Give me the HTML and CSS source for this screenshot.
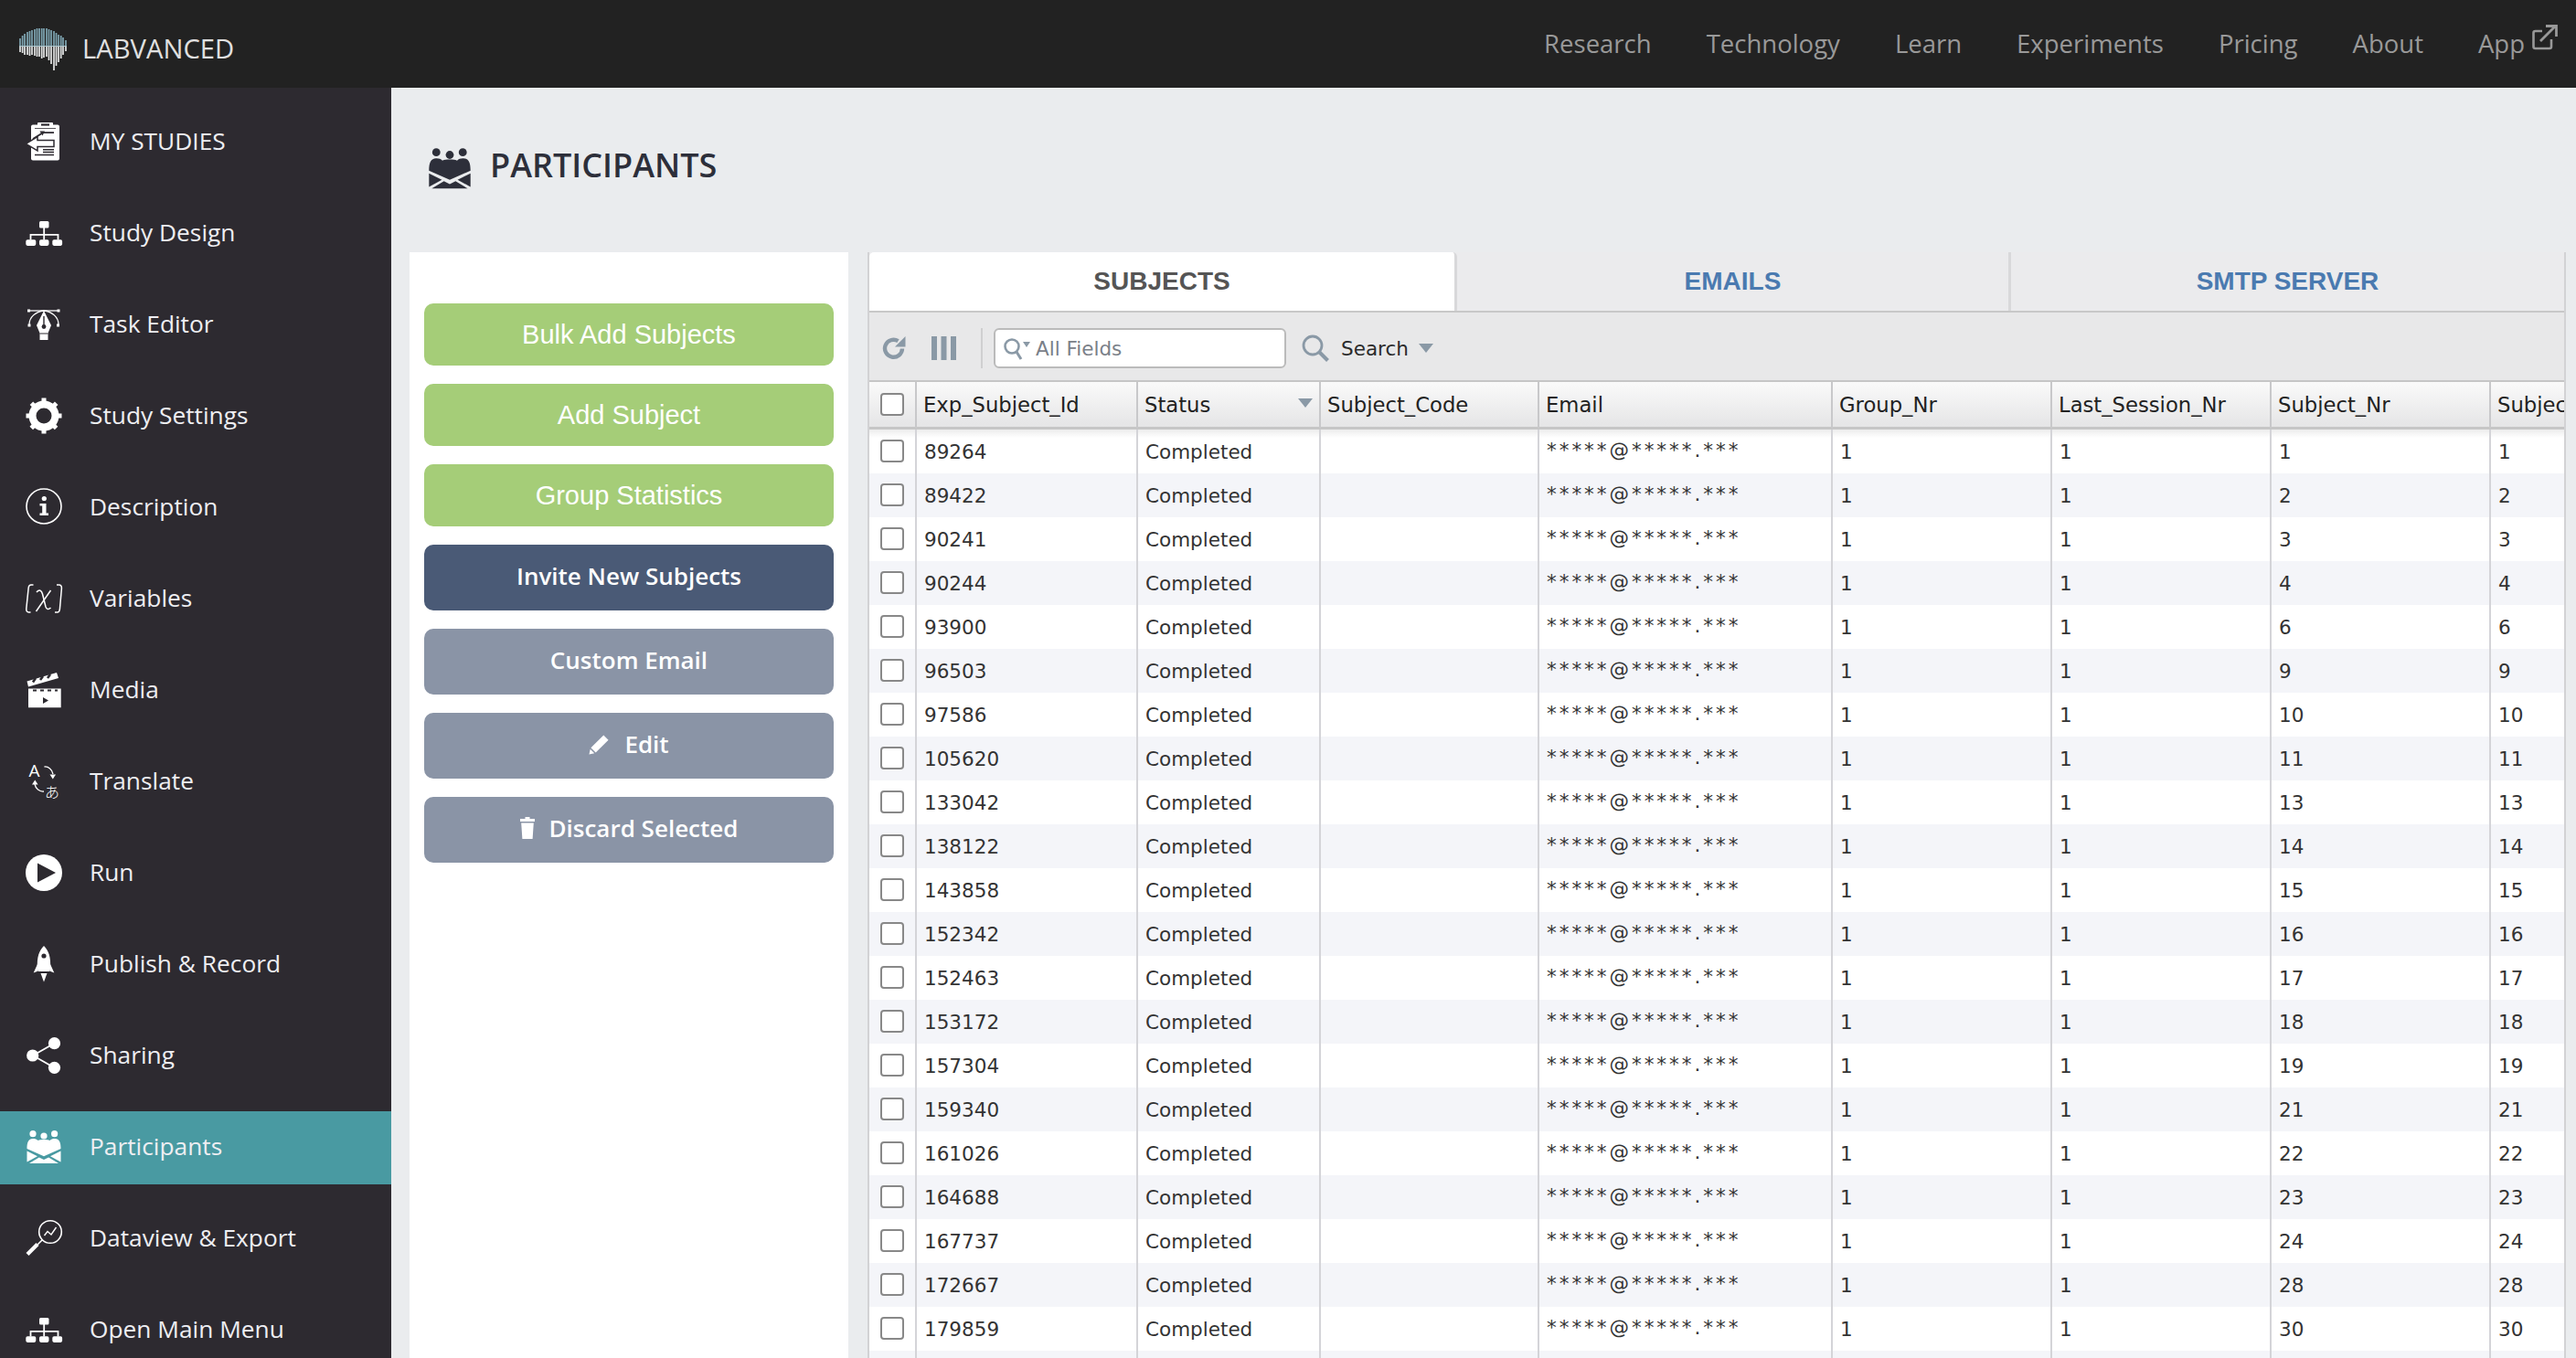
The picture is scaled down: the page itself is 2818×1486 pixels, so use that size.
FILE: index.html
```html
<!DOCTYPE html>
<html lang="en">
<head>
<meta charset="utf-8">
<title>Labvanced - Participants</title>
<link rel="stylesheet" href="styles.css">
</head>
<body>
<svg class="defs" aria-hidden="true">
  <symbol id="i-org" viewBox="0 0 44 44">
    <rect x="17" y="10" width="10.5" height="7.5" rx="1.5" fill="#fff"/>
    <path d="M22.2 17v7.5M7.5 30.5v-5.7h30v5.7M22.2 24.5v6" stroke="#fff" stroke-width="1.8" fill="none"/>
    <rect x="2.3" y="30.3" width="11" height="6.6" rx="1.8" fill="#fff"/>
    <rect x="17" y="30.3" width="10.5" height="6.6" rx="1.8" fill="#fff"/>
    <rect x="31.3" y="30.3" width="10.8" height="6.6" rx="1.8" fill="#fff"/>
  </symbol>
  <symbol id="i-people" viewBox="0 0 44 44">
    <circle cx="10" cy="8.7" r="3.6"/><circle cx="22" cy="11" r="3.6"/><circle cx="33.6" cy="8.7" r="3.6"/>
    <path d="M3.5 25C3.5 18 5 14 10 14C12.5 14 14 14.6 15.5 16C17 15.2 19 15 22 15C25 15 27 15.2 28.5 16C30 14.6 31.5 14 34 14C39 14 40.5 18 40.5 25L22 33.2Z"/>
    <path d="M3.5 27.5L15 33.2L3.5 39.5Z"/>
    <path d="M40.5 27.5L29 33.2L40.5 39.5Z"/>
    <path d="M6 41L16.8 34.5L22 37L27.2 34.5L38 41Z"/>
  </symbol>
</svg>

<header class="topbar">
  <a class="brand">
    <svg class="logo" viewBox="0 0 54 50" width="54" height="50">
      <path stroke="#7fa6b3" stroke-width="1.7" fill="none" d="M2 13V21M4.6 10V21M7 8V21M10 6V21M12.5 5V21M15 4V21M18 3V21M20.5 2V21M23 2V21M25.7 2V21M28 2V21M31 2V21M33.5 3V21M36 4V21M39 5V21M41.5 7V21M44 9V21M46.7 10V21M49 12V21M52 15V21"/>
      <path stroke="#e4e6e6" stroke-width="1.7" fill="none" d="M2 22V28M4.6 22V29M7 22V31M10 22V31M12.5 22V32M15 22V31M18 22V32M20.5 22V33M23 22V33M25.7 22V35M28 22V34M31 22V33M33.5 22V37M36 22V41M39 22V48M41.5 22V43M44 22V39M46.7 22V35M49 22V31M52 22V27"/>
      <path stroke="#a9c3ca" stroke-width="1" d="M1 21.5H53"/>
    </svg>
    <span class="brand-name">LABVANCED</span>
  </a>
  <nav class="topnav">
    <a>Research</a><a>Technology</a><a>Learn</a><a>Experiments</a><a>Pricing</a><a>About</a>
    <a class="app">App
      <svg viewBox="0 0 28 28" width="28" height="28" class="ext"><path d="M11 7H3.5a2 2 0 0 0-2 2v15a2 2 0 0 0 2 2H19a2 2 0 0 0 2-2v-8" fill="none" stroke="#999" stroke-width="2.6"/><path d="M9 18L25 2M15 1.5H26.5V13" fill="none" stroke="#999" stroke-width="2.8"/></svg>
    </a>
  </nav>
</header>

<div class="shell">
  <aside class="sidebar">
    <a class="nav-item">
      <svg class="ico" viewBox="0 0 44 44">
        <rect x="8" y="4.5" width="31" height="39" rx="2" fill="#fff"/><rect x="15" y="2" width="17" height="4" rx="1" fill="#fff"/>
        <rect x="19" y="3.4" width="9" height="2.2" fill="#2d2a30"/>
        <path d="M12 8.5H35" stroke="#2d2a30" stroke-width="0.8"/>
        <path d="M10 20L21 13.2H33" stroke="#2d2a30" stroke-width="1.8" fill="none"/>
        <path d="M17.5 11.5L23 11.5L20.5 16.5Z" fill="#2d2a30"/>
        <path d="M2.3 25.3L15 17.5V21.5H33V28.5H15V33Z" fill="#fff" stroke="#2d2a30" stroke-width="1.5"/>
        <path d="M21 31.8H33M21 34.6H33M12 37.5H33" stroke="#2d2a30" stroke-width="1.5" fill="none"/>
      </svg>
      <span>MY STUDIES</span>
    </a>
    <a class="nav-item"><svg class="ico"><use href="#i-org"/></svg><span>Study Design</span></a>
    <a class="nav-item">
      <svg class="ico" viewBox="0 0 44 44">
        <path d="M6 8H38" stroke="#fff" stroke-width="1.3"/>
        <path d="M6 23C6 15 13 9 22 8C31 9 38 15 38 23" fill="none" stroke="#fff" stroke-width="1.3"/>
        <rect x="4" y="6.5" width="3" height="3" fill="#fff"/><rect x="36.5" y="6.5" width="3" height="3" fill="#fff"/><rect x="4.5" y="22.5" width="3" height="3" fill="#fff"/><rect x="36" y="22.5" width="3" height="3" fill="#fff"/>
        <path d="M22 8L30 24L26.5 32.5V40H17.5V32.5L14 24Z" fill="#fff"/>
        <path d="M22 14V24" stroke="#2d2a30" stroke-width="1.4"/><circle cx="22" cy="25.5" r="2.4" fill="#2d2a30"/><path d="M17.5 33H26.5" stroke="#2d2a30" stroke-width="1"/>
      </svg>
      <span>Task Editor</span>
    </a>
    <a class="nav-item">
      <svg class="ico" viewBox="0 0 44 44">
        <circle cx="22" cy="23" r="12.5" fill="none" stroke="#fff" stroke-width="8"/>
        <g fill="#fff">
          <rect x="19.5" y="3.5" width="5" height="5"/><rect x="19.5" y="37.5" width="5" height="5"/><rect x="2.5" y="20.5" width="5" height="5"/><rect x="36.5" y="20.5" width="5" height="5"/>
          <rect x="7.5" y="8.5" width="5" height="5" transform="rotate(45 10.2 11.2)"/><rect x="31.3" y="8.5" width="5" height="5" transform="rotate(45 33.8 11.2)"/><rect x="7.5" y="32.3" width="5" height="5" transform="rotate(45 10.2 34.8)"/><rect x="31.3" y="32.3" width="5" height="5" transform="rotate(45 33.8 34.8)"/>
        </g>
      </svg>
      <span>Study Settings</span>
    </a>
    <a class="nav-item">
      <svg class="ico" viewBox="0 0 44 44">
        <circle cx="22" cy="22" r="19" fill="none" stroke="#fff" stroke-width="1.6"/>
        <circle cx="22.3" cy="13.5" r="2.6" fill="#fff"/>
        <path d="M17.5 19H24.5V29.5H27V32H17.5V29.5H20.2V21.5H17.5Z" fill="#fff"/>
      </svg>
      <span>Description</span>
    </a>
    <a class="nav-item">
      <svg class="ico" viewBox="0 0 44 44" fill="none" stroke="#fff" stroke-width="1.5">
        <path d="M10.5 8H8C6.5 8 5.5 9 5.2 11L2.8 34C2.6 36.5 3.5 38 5.5 38H7.5"/>
        <path d="M36 8H38.5C40.5 8 41.6 9.5 41.4 12L39.4 34.5C39.2 36.8 38 38 36.5 38H34"/>
        <path d="M14 16C17 12.5 19.5 14 20.5 18L24 32C25 35 27 35.5 29.5 33"/>
        <path d="M29.5 14L13.5 37"/>
      </svg>
      <span>Variables</span>
    </a>
    <a class="nav-item">
      <svg class="ico" viewBox="0 0 44 44">
        <path d="M5 21.5H40.7V42.3H5Z" fill="#fff"/>
        <path d="M10 23.5H14M18 23.5H22M26 23.5H30M34 23.5H37" stroke="#2d2a30" stroke-width="2.2"/>
        <path d="M21 31L27 34.5L21 38Z" fill="#2d2a30"/>
        <path d="M3.5 13.5L36 4L38 10L5 19.5Z" fill="#fff"/>
        <path d="M10 14.5L13 10M18 12L21 8M26 10L29 6" stroke="#2d2a30" stroke-width="2.6"/>
      </svg>
      <span>Media</span>
    </a>
    <a class="nav-item">
      <svg class="ico" viewBox="0 0 44 44">
        <text x="5.5" y="17.5" class="ico-a">A</text>
        <text x="23" y="41" class="ico-kana">あ</text>
        <path d="M22.5 7C27 6.5 31 10 32 15" fill="none" stroke="#fff" stroke-width="1.3"/><path d="M28.5 15.5H35L31.8 20.5Z" fill="#fff"/>
        <path d="M22 34C17 34.5 13 31 12 26" fill="none" stroke="#fff" stroke-width="1.3"/><path d="M9 26.5H15.5L12.3 21.5Z" fill="#fff"/>
      </svg>
      <span>Translate</span>
    </a>
    <a class="nav-item">
      <svg class="ico" viewBox="0 0 44 44">
        <circle cx="22" cy="23" r="20" fill="#fff"/>
        <path d="M15 12.5L35 23L15 33.5Z" fill="#2d2a30"/>
      </svg>
      <span>Run</span>
    </a>
    <a class="nav-item">
      <svg class="ico" viewBox="0 0 44 44">
        <path d="M22 3C27 8 30 15 29 28C29 29 28.5 30 28 31H16C15.5 30 15 29 15 28C14 15 17 8 22 3Z" fill="#fff"/>
        <circle cx="22" cy="14" r="2.6" fill="#2d2a30"/>
        <path d="M15 23L10.7 32.5L15.8 30.5ZM29 23L33.3 32.5L28.2 30.5Z" fill="#fff"/>
        <path d="M18.5 33H25.5L22 42.5Z" fill="#fff"/>
      </svg>
      <span>Publish &amp; Record</span>
    </a>
    <a class="nav-item">
      <svg class="ico" viewBox="0 0 44 44">
        <path d="M33.3 9.7L10 23L33.3 36.3" fill="none" stroke="#fff" stroke-width="1.8"/>
        <circle cx="33.5" cy="9.7" r="6.6" fill="#fff"/><circle cx="9.7" cy="23" r="6.6" fill="#fff"/><circle cx="33.5" cy="36.3" r="6.6" fill="#fff"/>
      </svg>
      <span>Sharing</span>
    </a>
    <a class="nav-item active"><svg class="ico people"><use href="#i-people"/></svg><span>Participants</span></a>
    <a class="nav-item">
      <svg class="ico" viewBox="0 0 44 44">
        <circle cx="29" cy="16" r="12.3" fill="none" stroke="#fff" stroke-width="1.6"/>
        <path d="M20.5 24.5L14 31" stroke="#fff" stroke-width="1.6"/><path d="M15 29.5L4 40.5" stroke="#fff" stroke-width="4.2"/>
        <path d="M22.5 20L26 15.5L30 19L35.5 11" fill="none" stroke="#fff" stroke-width="1.4"/>
      </svg>
      <span>Dataview &amp; Export</span>
    </a>
    <a class="nav-item"><svg class="ico"><use href="#i-org"/></svg><span>Open Main Menu</span></a>
  </aside>

  <main class="main">
    <div class="page-title">
      <svg class="title-ico"><use href="#i-people"/></svg>
      <h1>PARTICIPANTS</h1>
    </div>
    <div class="content">
      <section class="panel">
        <button class="btn green">Bulk Add Subjects</button>
        <button class="btn green">Add Subject</button>
        <button class="btn green">Group Statistics</button>
        <button class="btn navy">Invite New Subjects</button>
        <button class="btn slate">Custom Email</button>
        <button class="btn slate">
          <svg viewBox="0 0 24 24" width="23" height="23"><path d="M17 1.5L22.5 7L8 21.5L2.5 16Z M1.8 17.5L6.5 22.2L0.5 23.5Z" fill="#fff"/></svg>
          Edit
        </button>
        <button class="btn slate">
          <svg viewBox="0 0 16 24" width="16" height="24"><path d="M5.5 0H10.5V2H16V5H0V2H5.5ZM1.2 6.5H14.8L13.6 24H2.4Z" fill="#fff"/></svg>
          Discard Selected
        </button>
      </section>

      <section class="grid">
        <div class="tabs">
          <div class="tab current">SUBJECTS</div>
          <div class="tab">EMAILS</div>
          <div class="tab">SMTP SERVER</div>
        </div>
        <div class="toolbar">
          <svg class="tool-refresh" viewBox="0 0 26 26" width="26" height="26"><path d="M22 13.5A9.5 9.5 0 1 1 17.5 5.2" fill="none" stroke="#8a99a6" stroke-width="4.4"/><path d="M25.5 0V11.5H14Z" fill="#8a99a6"/></svg>
          <svg class="tool-cols" viewBox="0 0 27 26" width="27" height="26"><path d="M0 0H6V26H0ZM10.5 0H16.5V26H10.5ZM21 0H27V26H21Z" fill="#8a99a6"/></svg>
          <span class="tool-sep"></span>
          <div class="field">
            <svg viewBox="0 0 30 26" width="30" height="26"><circle cx="10" cy="11" r="7.5" fill="none" stroke="#8a99a6" stroke-width="2.6"/><path d="M15 17L20 25" stroke="#8a99a6" stroke-width="3"/><path d="M22 6H30L26 12Z" fill="#8a99a6"/></svg>
            <span>All Fields</span>
          </div>
          <svg class="tool-search" viewBox="0 0 30 30" width="30" height="30"><circle cx="12" cy="12" r="10" fill="none" stroke="#8a99a6" stroke-width="2.8"/><path d="M19 19L28.5 28.5" stroke="#8a99a6" stroke-width="4"/></svg>
          <span class="search-label">Search</span>
          <span class="caret"></span>
        </div>
        <div class="table-wrap">
          <table>
            <colgroup><col class="c0"><col class="c1"><col class="c2"><col class="c3"><col class="c4"><col class="c5"><col class="c6"><col class="c7"><col class="c8"></colgroup>
            <thead>
              <tr><th><span class="box"></span></th><th>Exp_Subject_Id</th><th class="sorted">Status<span class="sort"></span></th><th>Subject_Code</th><th>Email</th><th>Group_Nr</th><th>Last_Session_Nr</th><th>Subject_Nr</th><th>Subjec</th></tr>
            </thead>
            <tbody>
              <tr><td><span class="box"></span></td><td>89264</td><td>Completed</td><td></td><td class="mail">*****@*****.***</td><td>1</td><td>1</td><td>1</td><td>1</td></tr>
              <tr><td><span class="box"></span></td><td>89422</td><td>Completed</td><td></td><td class="mail">*****@*****.***</td><td>1</td><td>1</td><td>2</td><td>2</td></tr>
              <tr><td><span class="box"></span></td><td>90241</td><td>Completed</td><td></td><td class="mail">*****@*****.***</td><td>1</td><td>1</td><td>3</td><td>3</td></tr>
              <tr><td><span class="box"></span></td><td>90244</td><td>Completed</td><td></td><td class="mail">*****@*****.***</td><td>1</td><td>1</td><td>4</td><td>4</td></tr>
              <tr><td><span class="box"></span></td><td>93900</td><td>Completed</td><td></td><td class="mail">*****@*****.***</td><td>1</td><td>1</td><td>6</td><td>6</td></tr>
              <tr><td><span class="box"></span></td><td>96503</td><td>Completed</td><td></td><td class="mail">*****@*****.***</td><td>1</td><td>1</td><td>9</td><td>9</td></tr>
              <tr><td><span class="box"></span></td><td>97586</td><td>Completed</td><td></td><td class="mail">*****@*****.***</td><td>1</td><td>1</td><td>10</td><td>10</td></tr>
              <tr><td><span class="box"></span></td><td>105620</td><td>Completed</td><td></td><td class="mail">*****@*****.***</td><td>1</td><td>1</td><td>11</td><td>11</td></tr>
              <tr><td><span class="box"></span></td><td>133042</td><td>Completed</td><td></td><td class="mail">*****@*****.***</td><td>1</td><td>1</td><td>13</td><td>13</td></tr>
              <tr><td><span class="box"></span></td><td>138122</td><td>Completed</td><td></td><td class="mail">*****@*****.***</td><td>1</td><td>1</td><td>14</td><td>14</td></tr>
              <tr><td><span class="box"></span></td><td>143858</td><td>Completed</td><td></td><td class="mail">*****@*****.***</td><td>1</td><td>1</td><td>15</td><td>15</td></tr>
              <tr><td><span class="box"></span></td><td>152342</td><td>Completed</td><td></td><td class="mail">*****@*****.***</td><td>1</td><td>1</td><td>16</td><td>16</td></tr>
              <tr><td><span class="box"></span></td><td>152463</td><td>Completed</td><td></td><td class="mail">*****@*****.***</td><td>1</td><td>1</td><td>17</td><td>17</td></tr>
              <tr><td><span class="box"></span></td><td>153172</td><td>Completed</td><td></td><td class="mail">*****@*****.***</td><td>1</td><td>1</td><td>18</td><td>18</td></tr>
              <tr><td><span class="box"></span></td><td>157304</td><td>Completed</td><td></td><td class="mail">*****@*****.***</td><td>1</td><td>1</td><td>19</td><td>19</td></tr>
              <tr><td><span class="box"></span></td><td>159340</td><td>Completed</td><td></td><td class="mail">*****@*****.***</td><td>1</td><td>1</td><td>21</td><td>21</td></tr>
              <tr><td><span class="box"></span></td><td>161026</td><td>Completed</td><td></td><td class="mail">*****@*****.***</td><td>1</td><td>1</td><td>22</td><td>22</td></tr>
              <tr><td><span class="box"></span></td><td>164688</td><td>Completed</td><td></td><td class="mail">*****@*****.***</td><td>1</td><td>1</td><td>23</td><td>23</td></tr>
              <tr><td><span class="box"></span></td><td>167737</td><td>Completed</td><td></td><td class="mail">*****@*****.***</td><td>1</td><td>1</td><td>24</td><td>24</td></tr>
              <tr><td><span class="box"></span></td><td>172667</td><td>Completed</td><td></td><td class="mail">*****@*****.***</td><td>1</td><td>1</td><td>28</td><td>28</td></tr>
              <tr><td><span class="box"></span></td><td>179859</td><td>Completed</td><td></td><td class="mail">*****@*****.***</td><td>1</td><td>1</td><td>30</td><td>30</td></tr>
              <tr><td></td><td></td><td></td><td></td><td></td><td></td><td></td><td></td><td></td></tr>
            </tbody>
          </table>
        </div>
      </section>
    </div>
  </main>
</div>
</body>
</html>
```
FILE: styles.css
```css
* { box-sizing: border-box; }
html, body { margin: 0; height: 100%; overflow: hidden; }
body {
  display: flex;
  flex-direction: column;
  background: #eaecee;
  font-family: "Open Sans", "Noto Sans", sans-serif;
  color: #2d2f3a;
}
.defs { display: none; }

/* top bar */
.topbar {
  flex: 0 0 96px;
  display: flex;
  align-items: center;
  justify-content: space-between;
  padding: 0 20px;
  background: #222222;
}
.brand { display: flex; align-items: center; gap: 16px; }
.logo { display: block; margin-top: 12px; }
.brand-name { font-size: 29.2px; font-weight: 400; color: #e0e0e0; margin-top: 10px; }
.topnav { display: flex; align-items: center; gap: 60px; font-size: 27.5px; font-weight: 500; color: #999999; margin-top: -2px; }
.app { display: flex; align-items: center; gap: 8px; }
.ext { margin-top: -12px; }

/* layout */
.shell { flex: 1; min-height: 0; display: flex; }
.sidebar {
  flex: 0 0 428px;
  display: flex;
  flex-direction: column;
  gap: 20px;
  padding-top: 20px;
  background: #2d2a30;
  overflow: hidden;
}
.nav-item {
  flex: 0 0 80px;
  display: flex;
  align-items: center;
  gap: 28px;
  padding: 0 0 4px 26px;
  font-size: 26.3px;
  color: #eeeef2;
}
.nav-item.active { background: #499aa2; }
.ico { flex: 0 0 44px; width: 44px; height: 44px; overflow: visible; }
.people { fill: #ffffff; }
.ico-a { font: 400 19px "Open Sans", sans-serif; fill: #fff; }
.ico-kana { font: 300 16px "Noto Sans CJK JP", sans-serif; fill: #fff; }

.main { flex: 1; min-width: 0; display: flex; flex-direction: column; }
.page-title {
  flex: 0 0 180px;
  display: flex;
  align-items: center;
  gap: 17px;
  padding: 0 0 11px 37px;
}
.title-ico { width: 54px; height: 54px; margin-top: 4px; fill: #2d2f3a; }
h1 { margin: 0; font-size: 36px; font-weight: 600; color: #2d2f3a; }
.content { flex: 1; min-height: 0; display: flex; gap: 21px; padding: 0 11px 0 20px; }

/* left panel */
.panel {
  flex: 0 0 480px;
  display: flex;
  flex-direction: column;
  gap: 20px;
  padding: 56px 16px 0;
  background: #ffffff;
}
.btn {
  height: 72px;
  display: flex;
  align-items: center;
  justify-content: center;
  gap: 16px;
  padding: 0 0 4px;
  border: 0;
  border-radius: 10px;
  color: #ffffff;
  font-family: "Open Sans", sans-serif;
  font-size: 26px;
  font-weight: 600;
}
.green {
  height: 68px;
  padding: 0;
  background: #a5cd78;
  font-family: "Liberation Sans", Arial, sans-serif;
  font-size: 29px;
  font-weight: 400;
}
.navy { background: #4a5a76; }
.slate { background: #8a94a6; }

/* grid */
.grid { flex: 1; min-width: 0; display: flex; flex-direction: column; border-left: 2px solid #d2d2d4; border-right: 2px solid #d2d2d4; overflow: hidden; }
.tabs { flex: 0 0 66px; display: flex; background: #ebebed; border-bottom: 2px solid #c8c8c8; }
.tab {
  display: flex;
  align-items: center;
  justify-content: center;
  border-right: 3px solid #d8d8da;
  font-family: "Liberation Sans", Arial, sans-serif;
  font-size: 28px;
  font-weight: 700;
  color: #4a7ab0;
}
.tab:nth-child(1) { flex: 0 0 643px; }
.tab:nth-child(2) { flex: 0 0 606px; }
.tab:nth-child(3) { flex: 1; border-right: 0; }
.tab.current { background: #ffffff; color: #555555; border-radius: 5px 5px 0 0; }

.toolbar {
  flex: 0 0 76px;
  display: flex;
  align-items: center;
  padding: 4px 0 0 14px;
  background: #e8e8e9;
  border-bottom: 2px solid #c6c6c6;
  font-family: "DejaVu Sans", sans-serif;
  font-size: 21.5px;
}
.tool-refresh { margin-right: 28px; }
.tool-cols { margin-right: 27px; }
.tool-sep { width: 2px; height: 44px; background: #cfcfd0; margin-right: 12px; }
.field {
  width: 320px;
  height: 44px;
  display: flex;
  align-items: center;
  gap: 6px;
  padding-left: 8px;
  background: #ffffff;
  border: 2px solid #bbbbbb;
  border-radius: 6px;
  color: #7a8088;
}
.tool-search { margin-left: 17px; margin-right: 13px; }
.search-label { color: #2b2b2b; }
.caret { width: 0; height: 0; margin-left: 11px; border-left: 8px solid transparent; border-right: 8px solid transparent; border-top: 10px solid #8a99a6; }

.table-wrap { flex: 1; min-height: 0; overflow: hidden; background: #ffffff; }
table {
  width: 1860px;
  table-layout: fixed;
  border-collapse: separate;
  border-spacing: 0;
  font-family: "DejaVu Sans", sans-serif;
  font-size: 21.5px;
  color: #333333;
}
.c0 { width: 52px; } .c1 { width: 242px; } .c2 { width: 200px; } .c3 { width: 239px; } .c4 { width: 321px; }
.c5 { width: 240px; } .c6 { width: 240px; } .c7 { width: 240px; } .c8 { width: 86px; }
th {
  height: 52px;
  padding: 1px 0 0 7px;
  position: relative;
  text-align: left;
  font-weight: 400;
  font-size: 22.7px;
  white-space: nowrap;
  overflow: hidden;
  color: #222222;
  background: linear-gradient(#fafafa, #e5e5e6);
  border-right: 2px solid #c8c8ca;
  border-bottom: 3px solid #c6c6c6;
}
td {
  height: 48px;
  padding: 0 8px;
  white-space: nowrap;
  overflow: hidden;
  border-right: 2px solid #d4d4d8;
}
th:first-child, td:first-child { padding: 0 0 0 12px; }
td:first-child .box { margin-bottom: 2px; }
th:last-child, td:last-child { border-right: 0; }
tbody tr:nth-child(even) td { background: #f4f5f9; }
tbody tr:first-child td { background: linear-gradient(#ececec, #ffffff 9px); }
.box { display: block; width: 26px; height: 25px; border: 2px solid #888888; border-radius: 4px; background: #ffffff; }
.sort { position: absolute; top: 18px; right: 7px; border-left: 8px solid transparent; border-right: 8px solid transparent; border-top: 10px solid #8a99a6; }
.mail { letter-spacing: 2.95px; font-size: 21.5px; padding-bottom: 4px; }
```
